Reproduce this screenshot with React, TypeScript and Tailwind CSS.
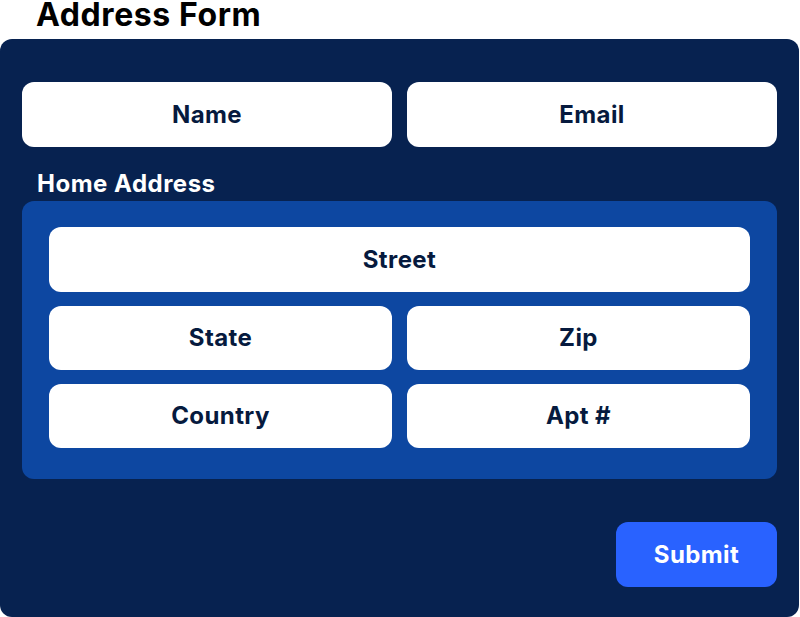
import React from "react";

const Field = ({ label, className = "" }: { label: string; className?: string }) => (
  <div
    className={`flex items-center justify-center rounded-[12px] bg-white text-[24px] font-bold tracking-[0.4px] text-[#061a3e] ${className}`}
  >
    {label}
  </div>
);

export default function App() {
  return (
    <div className="w-[800px] h-[617px] bg-white" style={{ fontFamily: "Inter, 'Noto Sans', sans-serif" }}>
      <h1 className="h-[39px] pl-[36px] text-[32px] font-bold leading-[30px] text-black tracking-[0.6px]">
        Address Form
      </h1>
      <div className="flex h-[578px] w-[799px] flex-col rounded-[12px] bg-[#072250] px-[22px] pt-[43px] pb-[30px]">
        <div className="grid grid-cols-2 gap-[15px]">
          <Field label="Name" className="h-[65px]" />
          <Field label="Email" className="h-[65px]" />
        </div>
        <div className="mt-[20px] h-[34px] pl-[15px] text-[24px] font-bold leading-[34px] tracking-[0.5px] text-white">
          Home Address
        </div>
        <div className="flex flex-col gap-[14px] rounded-[12px] bg-[#0d47a1] px-[27px] pt-[26px] pb-[31px]">
          <Field label="Street" className="h-[65px]" />
          <div className="grid grid-cols-2 gap-[15px]">
            <Field label="State" className="h-[64px]" />
            <Field label="Zip" className="h-[64px]" />
          </div>
          <div className="grid grid-cols-2 gap-[15px]">
            <Field label="Country" className="h-[64px]" />
            <Field label="Apt #" className="h-[64px]" />
          </div>
        </div>
        <div className="mt-auto flex justify-end">
          <button className="flex h-[65px] w-[161px] items-center justify-center rounded-[12px] bg-[#2962ff] text-[24px] font-bold tracking-[0.4px] text-white">
            Submit
          </button>
        </div>
      </div>
    </div>
  );
}
